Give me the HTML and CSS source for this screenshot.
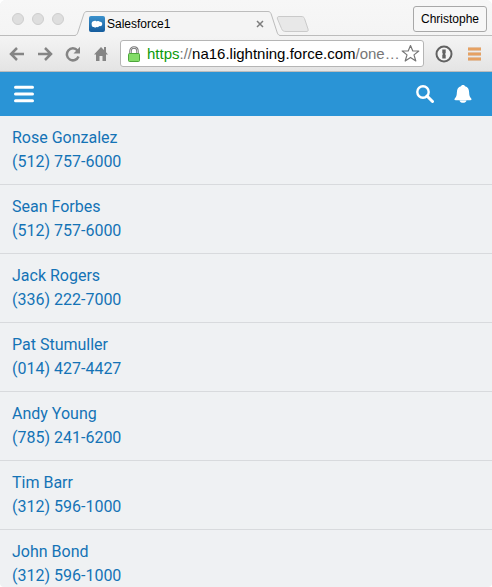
FILE: index.html
```html
<!DOCTYPE html>
<html lang="en">
<head>
<meta charset="utf-8">
<title>Salesforce1</title>
<link rel="stylesheet" href="styles.css">
</head>
<body>
<div class="window">
  <div class="tab-strip">
    <div class="lights">
      <button class="light" aria-label="Close window"></button>
      <button class="light" aria-label="Minimize window"></button>
      <button class="light" aria-label="Zoom window"></button>
    </div>
    <div class="tab">
      <svg class="tab-edge" width="12" height="25" viewBox="0 0 12 25" aria-hidden="true">
        <path d="M0 24.500C2 24 2.500 22.500 3 21L8.500 4C9.300 1.500 10 .5 12 .5V25H0z" fill="#f4f4f4"/>
        <path d="M0 24.500C2 24 2.500 22.500 3 21L8.500 4C9.300 1.500 10 .5 12 .5" fill="none" stroke="#bcbcbc"/>
      </svg>
      <div class="tab-body">
        <svg class="favicon" width="16" height="16" viewBox="0 0 16 16" aria-hidden="true">
          <defs><linearGradient id="fav" x2="0" y2="1"><stop stop-color="#3b91cc"/><stop offset="1" stop-color="#155c9d"/></linearGradient></defs>
          <rect width="16" height="16" rx="2" fill="url(#fav)"/>
          <path d="M5 11C3.500 11.200 2.600 10 2.700 8.700C2.200 6.500 3.500 5 5.200 5C6.200 4.500 7 4.700 7.800 5.400C9 4.700 10.200 5 10.800 5.800C12.500 5.700 13.400 6.800 13.200 8.200C13 9.800 11.800 10.300 10.500 10.100C9.500 11.400 8.200 11.200 7.500 11C6.800 11.800 5.600 11.700 5 11z" fill="#fff"/>
        </svg>
        <span class="tab-title">Salesforce1</span>
        <button class="tab-close" aria-label="Close tab">
          <svg width="8" height="8" viewBox="0 0 8 8"><path d="M1 1L7 7M7 1L1 7" stroke="#7d7d7d" stroke-width="1.500"/></svg>
        </button>
      </div>
      <svg class="tab-edge" width="12" height="25" viewBox="0 0 12 25" aria-hidden="true">
        <path d="M12 24.500C10 24 9.500 22.500 9 21L3.500 4C2.700 1.500 2 .5 0 .5V25H12z" fill="#f4f4f4"/>
        <path d="M12 24.500C10 24 9.500 22.500 9 21L3.500 4C2.700 1.500 2 .5 0 .5" fill="none" stroke="#bcbcbc"/>
      </svg>
    </div>
    <button class="new-tab" aria-label="New tab">
      <svg width="34" height="17" viewBox="0 0 34 17"><path d="M3 .5H25C27 .5 28 1 28.500 2.500L32 13C32.500 15 32 15.500 30 15.500H10C7.500 15.500 6.500 15 5.500 12.500L1.500 3C1 1.500 1.500 .5 3 .5z" fill="#e8e8e8" stroke="#cacaca"/></svg>
    </button>
    <button class="profile">Christophe</button>
  </div>

  <div class="toolbar">
    <div class="nav">
      <button aria-label="Back"><svg width="16" height="16" viewBox="0 0 16 16"><path d="M8 2L2 8L8 14M2 8H15" fill="none" stroke="#858585" stroke-width="2.500"/></svg></button>
      <button aria-label="Forward"><svg width="16" height="16" viewBox="0 0 16 16"><path d="M8 2L14 8L8 14M1 8H14" fill="none" stroke="#858585" stroke-width="2.500"/></svg></button>
      <button aria-label="Reload"><svg width="16" height="16" viewBox="0 0 16 16"><path d="M12.500 4.500A6 6 0 1 0 13.500 10.500" fill="none" stroke="#858585" stroke-width="2.500"/><path d="M15 .8V7.500H8.500z" fill="#858585"/></svg></button>
      <button aria-label="Home"><svg width="16" height="16" viewBox="0 0 16 16"><path d="M8 1L1 8.500H3V15H6.500V10H9.500V15H13V8.500H15L13 6.300V1H11V4z" fill="#858585"/></svg></button>
    </div>
    <div class="address">
      <svg width="12" height="16" viewBox="0 0 12 16" aria-hidden="true">
        <path d="M2.500 8V5C2.500 .2 9.500 .2 9.500 5V8" fill="none" stroke="#777" stroke-width="2.500"/>
        <path d="M2.500 8V5C2.500 .2 9.500 .2 9.500 5V8" fill="none" stroke="#ccc"/>
        <rect x=".5" y="7.500" width="11" height="8" rx="1" fill="#83dc68" stroke="#4da63c"/>
      </svg>
      <div class="url" role="textbox" contenteditable="true" spellcheck="false" aria-label="Address"><span class="secure">https</span><span class="muted">://</span>na16.lightning.force.com<span class="muted">/one…</span></div>
      <button aria-label="Bookmark"><svg width="19" height="19" viewBox="0 0 19 19"><path d="M9.500 1.500L11.800 7H17.800L13 10.900L14.800 17L9.500 13.400L4.200 17L6 10.900L1.200 7H7.200z" fill="#fff" stroke="#777" stroke-width="1.200" stroke-linejoin="round"/></svg></button>
    </div>
    <button aria-label="Password manager"><svg width="18" height="18" viewBox="0 0 18 18"><circle cx="9" cy="9" r="7.500" fill="#f5f5f5" stroke="#626262" stroke-width="2"/><path d="M7.300 4.500H10.700V8L10 9L10.700 10V13.500H7.300V10L8 9L7.300 8z" fill="#626262"/></svg></button>
    <button class="menu" aria-label="Browser menu"><svg width="14" height="14" viewBox="0 0 14 14"><path d="M0 2H13M0 7H13M0 12H13" stroke="#d79458" stroke-width="3"/><path d="M0 2H13M0 7H13M0 12H13" stroke="#f5ae6c" stroke-width="1"/></svg></button>
  </div>

  <header class="app-bar">
    <button aria-label="Navigation menu"><svg width="20" height="18" viewBox="0 0 20 18"><path d="M1.500 2.200H18.500M1.500 9H18.500M1.500 15.800H18.500" stroke="#fff" stroke-width="3" stroke-linecap="round"/></svg></button>
    <div class="app-actions">
      <button aria-label="Search"><svg width="18" height="18" viewBox="0 0 18 18"><circle cx="7" cy="7" r="5.700" fill="none" stroke="#fff" stroke-width="2.400"/><path d="M11 11L16.500 16.500" stroke="#fff" stroke-width="3" stroke-linecap="round"/></svg></button>
      <button aria-label="Notifications"><svg width="18" height="18" viewBox="0 0 18 18"><path d="M9 0C10 0 10.700 .5 11 1.300C13.800 2 15 4 15.100 7C15.200 10.500 15.700 12 17.200 13.500C17.800 14.200 17.500 15.200 16.500 15.200H1.500C.5 15.200 .2 14.200 .8 13.500C2.300 12 2.800 10.500 2.900 7C3 4 4.200 2 7 1.300C7.300 .5 8 0 9 0zM5.500 15.500H12.500C12 18.600 6 18.600 5.500 15.500z" fill="#fff"/></svg></button>
    </div>
  </header>

  <main>
    <ul class="contacts">
      <li><a href="#rose">Rose Gonzalez</a><a href="tel:5127576000">(512) 757-6000</a></li>
      <li><a href="#sean">Sean Forbes</a><a href="tel:5127576000">(512) 757-6000</a></li>
      <li><a href="#jack">Jack Rogers</a><a href="tel:3362227000">(336) 222-7000</a></li>
      <li><a href="#pat">Pat Stumuller</a><a href="tel:0144274427">(014) 427-4427</a></li>
      <li><a href="#andy">Andy Young</a><a href="tel:7852416200">(785) 241-6200</a></li>
      <li><a href="#tim">Tim Barr</a><a href="tel:3125961000">(312) 596-1000</a></li>
      <li><a href="#john">John Bond</a><a href="tel:3125961000">(312) 596-1000</a></li>
    </ul>
  </main>
</div>
</body>
</html>
```
FILE: styles.css
```css
* {
  box-sizing: border-box;
}

body {
  margin: 0;
  background: #fff;
  font-family: "Liberation Sans", Arial, sans-serif;
}

button {
  display: flex;
  flex: none;
  padding: 0;
  border: 0;
  background: none;
  font: inherit;
}

svg {
  display: block;
  flex: none;
}

.window {
  height: 100vh;
  overflow: hidden;
  border-radius: 6px 6px 4px 4px;
  background: #eff1f3;
}

.tab-strip {
  display: flex;
  align-items: flex-end;
  height: 36px;
  padding: 0 5px 0 12px;
  background: linear-gradient(#f7f7f7, #f4f4f4);
  box-shadow: inset 0 -1px #bcbcbc;
}

.lights {
  display: flex;
  gap: 8px;
  margin-bottom: 11px;
}

.light {
  width: 12px;
  height: 12px;
  border: 1px solid #cecece;
  border-radius: 50%;
  background: #dedede;
}

.tab {
  display: flex;
  flex: 0 1 205px;
  margin-left: 11px;
}

.tab-body {
  display: flex;
  flex: 1;
  align-items: center;
  height: 25px;
  padding: 0 4px 0 2px;
  border-top: 1px solid #bcbcbc;
  background: #f4f4f4;
}

.tab-title {
  flex: 1;
  margin-left: 2px;
  font-size: 12px;
}

.new-tab {
  margin: 0 0 3px -4px;
}

.profile {
  margin: 0 0 4px auto;
  padding: 0 7px;
  border: 1px solid #a8a8a8;
  border-radius: 3px;
  background: #f7f7f7;
  font-size: 12px;
  line-height: 24px;
}

.toolbar {
  display: flex;
  align-items: center;
  height: 36px;
  padding: 0 10px 0 9px;
  border-bottom: 1px solid #bcbcbc;
  background: linear-gradient(#f4f4f4, #e4e4e4);
}

.nav {
  display: flex;
  gap: 12px;
  margin-right: 11px;
}

.address {
  display: flex;
  flex: 1;
  align-items: center;
  min-width: 0;
  height: 27px;
  margin-right: 11px;
  padding: 0 3px 0 7px;
  border: 1px solid #b5b5b5;
  border-radius: 3px;
  background: #fff;
}

.url {
  flex: 1;
  min-width: 0;
  margin-left: 7px;
  overflow: hidden;
  font-size: 15px;
  line-height: 20px;
  white-space: nowrap;
}

.secure {
  color: #0b9a0b;
}

.muted {
  color: #777;
}

.menu {
  margin-left: 15px;
}

.app-bar {
  display: flex;
  align-items: center;
  justify-content: space-between;
  height: 44px;
  padding: 0 20px 0 14px;
  background: #2a94d6;
}

.app-actions {
  display: flex;
  gap: 20px;
}

.contacts {
  margin: 0;
  padding: 0;
  list-style: none;
}

.contacts li {
  display: flex;
  flex-direction: column;
  align-items: flex-start;
  padding: 10px 12px;
  border-bottom: 1px solid #d8dadd;
}

.contacts a {
  color: #1473b6;
  font-family: Roboto, sans-serif;
  font-size: 16px;
  line-height: 24px;
  text-decoration: none;
}
```
